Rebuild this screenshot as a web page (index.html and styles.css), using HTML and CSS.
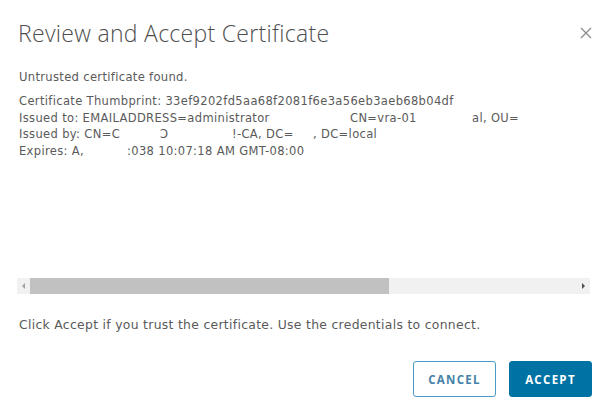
FILE: index.html
```html
<!DOCTYPE html>
<html>
<head>
<meta charset="utf-8">
<link rel="stylesheet" href="styles.css">
</head>
<body>
<div class="modal">
  <div class="header">
    <h1 class="title">Review and Accept Certificate</h1>
    <button class="close" aria-label="Close">
      <svg width="12" height="12" viewBox="0 0 12 12"><path d="M1 1 L11 11 M11 1 L1 11" stroke="#8c8c8c" stroke-width="1.3" fill="none"/></svg>
    </button>
  </div>
  <div class="body">
    <p class="intro">Untrusted certificate found.</p>
    <div class="cert">
      <div class="cert-text">
        <div class="line">Certificate Thumbprint: 33ef9202fd5aa68f2081f6e3a56eb3aeb68b04df</div>
        <div class="line"><span class="seg w-to">Issued to: EMAILADDRESS=administrator</span><span class="seg w-cn">CN=vra-01</span><span class="seg">al, OU=</span></div>
        <div class="line"><span class="seg w-by">Issued by: CN=C</span><span class="seg w-d">Ↄ</span><span class="seg w-ca">!-CA, DC=</span><span class="seg">, DC=local</span></div>
        <div class="line"><span class="seg w-ex">Expires: A,</span><span class="seg">:038 10:07:18 AM GMT-08:00</span></div>
      </div>
      <div class="scrollbar">
        <span class="arrow arrow-left"></span>
        <div class="track"><div class="thumb"></div></div>
        <span class="arrow arrow-right"></span>
      </div>
    </div>
    <p class="note">Click Accept if you trust the certificate. Use the credentials to connect.</p>
  </div>
  <div class="footer">
    <button class="btn btn-outline">Cancel</button>
    <button class="btn btn-primary">Accept</button>
  </div>
</div>
</body>
</html>
```

FILE: styles.css
```css
* { box-sizing: border-box; }
html, body {
  margin: 0;
  background: #ffffff;
}
body {
  font-family: "DejaVu Sans", "Liberation Sans", sans-serif;
  color: #5a5a5a;
  width: 613px;
  height: 416px;
  overflow: hidden;
}
.modal {
  display: flex;
  flex-direction: column;
  height: 416px;
  padding: 0 18px 0 18px;
}
.header {
  display: flex;
  align-items: center;
  justify-content: space-between;
  height: 65px;
}
.title {
  margin: 0;
  font-family: "Open Sans", "Liberation Sans", sans-serif;
  font-weight: 300;
  font-size: 23px;
  color: #4e4e4e;
  letter-spacing: 0.3px;
}
.close {
  border: 0;
  background: none;
  padding: 0;
  margin-right: 3px;
  display: flex;
}
.body {
  display: flex;
  flex-direction: column;
}
.intro {
  margin: 4px 0 0 1px;
  font-size: 11.6px;
  line-height: 16px;
  letter-spacing: 0.3px;
}
.cert {
  margin-top: 8px;
}
.cert-text {
  height: 185px;
  padding-left: 1px;
  font-size: 11.5px;
  line-height: 16.7px;
  letter-spacing: 0.35px;
  white-space: nowrap;
}
.line {
  display: flex;
}
.seg { display: inline-block; flex: none; }
.w-to { width: 331px; }
.w-cn { width: 122px; }
.w-by { width: 141px; }
.w-d { width: 72px; }
.w-ca { width: 81px; }
.w-ex { width: 108px; }
.scrollbar {
  display: flex;
  align-items: center;
  height: 16px;
  background: #f1f1f1;
  width: 573px;
  margin-left: -1px;
}
.arrow {
  width: 13px;
  height: 16px;
  position: relative;
  flex: none;
}
.arrow-left::after, .arrow-right::after {
  content: "";
  position: absolute;
  top: 5px;
  border-top: 3px solid transparent;
  border-bottom: 3px solid transparent;
}
.arrow-left::after {
  left: 5px;
  border-right: 3px solid #a0a0a0;
}
.arrow-right::after {
  left: 5px;
  border-left: 3px solid #505050;
}
.track {
  flex: 1;
  height: 16px;
  display: flex;
  align-items: center;
}
.thumb {
  width: 359px;
  height: 16px;
  background: #c1c1c1;
}
.note {
  margin: 23px 0 0 1px;
  font-size: 12.4px;
  line-height: 16px;
  letter-spacing: 0.3px;
}
.footer {
  display: flex;
  justify-content: flex-end;
  gap: 13px;
  margin-top: 28px;
  padding-right: 3px;
}
.btn {
  height: 36px;
  width: 83px;
  border-radius: 3px;
  font-family: "Open Sans", "Liberation Sans", sans-serif;
  font-weight: 700;
  font-size: 11.5px;
  letter-spacing: 1.3px;
  text-transform: uppercase;
  padding: 0;
}
.btn-outline {
  background: #ffffff;
  border: 1px solid #4b9bc6;
  color: #4682a8;
}
.btn-primary {
  background: #0072a3;
  border: 1px solid #0072a3;
  color: #ffffff;
}
```
